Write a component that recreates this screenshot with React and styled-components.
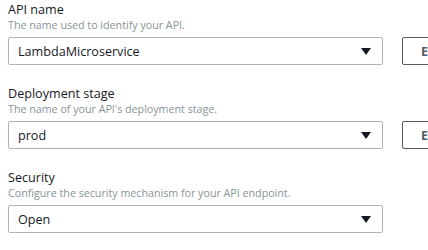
import React from "react";
import styled, { createGlobalStyle } from "styled-components";

const Global = createGlobalStyle`
  html, body { margin: 0; padding: 0; background: #fff; overflow: hidden; }
  body { font-family: "Open Sans", "Noto Sans", sans-serif; }
`;

const Page = styled.div`
  width: 428px;
  height: 250px;
  overflow: hidden;
  padding: 1px 0 0 8px;
  box-sizing: border-box;
  display: flex;
  flex-direction: column;
  gap: 20px;
`;

const Field = styled.div`
  display: flex;
  flex-direction: column;
`;

const Label = styled.div`
  font-size: 12.6px;
  line-height: 17px;
  color: #16191f;
`;

const Description = styled.div`
  font-size: 10.7px;
  line-height: 14px;
  color: #879596;
`;

const Row = styled.div`
  display: flex;
  align-items: center;
  gap: 19px;
  margin-top: 5px;
  white-space: nowrap;
`;

const Select = styled.div`
  flex: 0 0 auto;
  width: 375px;
  height: 28px;
  box-sizing: border-box;
  border: 1px solid #aab7b8;
  border-radius: 2px;
  display: flex;
  align-items: center;
  justify-content: space-between;
  padding: 0 11px 0 9px;
  font-size: 12.6px;
  color: #16191f;
`;

const Caret = styled.svg`
  width: 10px;
  height: 7px;
  display: block;
`;

const Button = styled.button`
  flex: 0 0 auto;
  height: 28px;
  box-sizing: border-box;
  border: 1px solid #545b64;
  border-radius: 2px;
  background: #fff;
  color: #545b64;
  font-family: "Open Sans", "Noto Sans", sans-serif;
  font-weight: 700;
  font-size: 12.6px;
  padding: 0 18px;
`;

const fields = [
  { label: "API name", desc: "The name used to identify your API.", value: "LambdaMicroservice", button: "Edit" },
  { label: "Deployment stage", desc: "The name of your API's deployment stage.", value: "prod", button: "Edit" },
  { label: "Security", desc: "Configure the security mechanism for your API endpoint.", value: "Open" },
];

export default function App() {
  return (
    <>
      <Global />
      <Page>
        {fields.map((f) => (
          <Field key={f.label}>
            <Label>{f.label}</Label>
            <Description>{f.desc}</Description>
            <Row>
              <Select>
                <span>{f.value}</span>
                <Caret viewBox="0 0 10 7">
                  <path d="M0 0 H10 L5 7 Z" fill="#16191f" />
                </Caret>
              </Select>
              {f.button && <Button>{f.button}</Button>}
            </Row>
          </Field>
        ))}
      </Page>
    </>
  );
}
